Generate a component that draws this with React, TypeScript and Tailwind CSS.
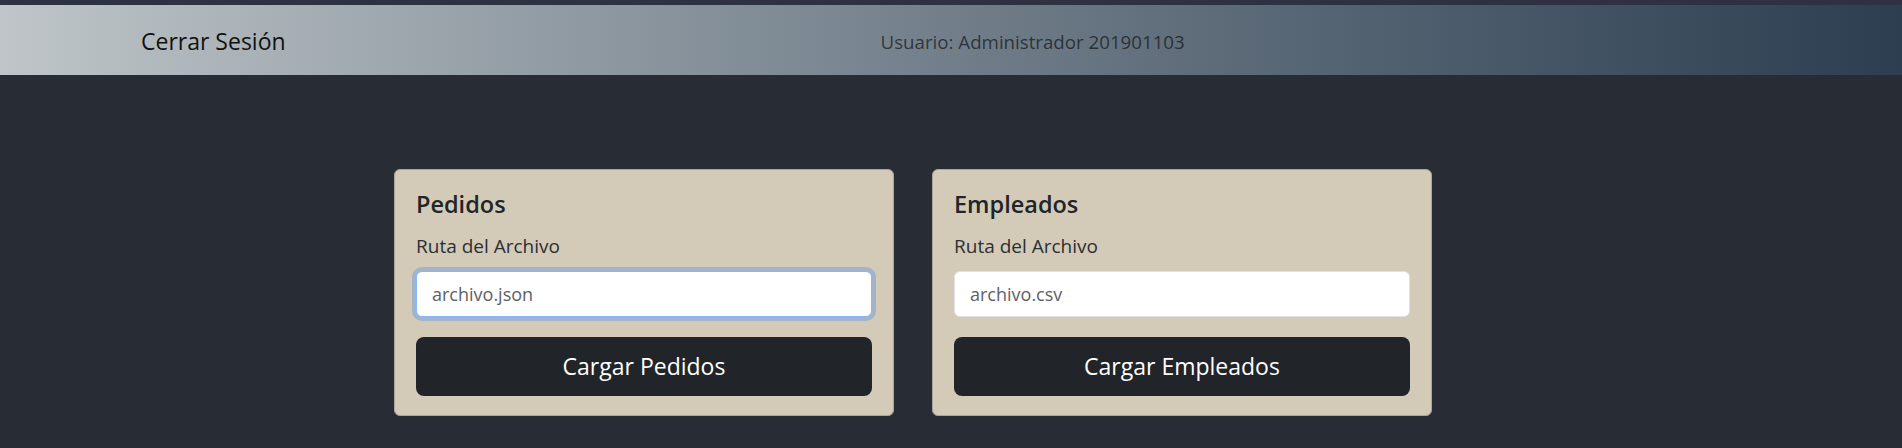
import React from "react";

interface Carga {
  id: string;
  titulo: string;
  placeholder: string;
  boton: string;
  activo?: boolean;
}

const cargas: Carga[] = [
  { id: "pedidos", titulo: "Pedidos", placeholder: "archivo.json", boton: "Cargar Pedidos", activo: true },
  { id: "empleados", titulo: "Empleados", placeholder: "archivo.csv", boton: "Cargar Empleados" },
];

function Navbar() {
  return (
    <nav className="h-[70px] flex items-center bg-linear-to-r from-[#bfc5c8] to-[#2c3e50]">
      <a href="#" className="ml-[141px] mt-[2px] text-[23px] text-[#111] leading-none">
        Cerrar Sesión
      </a>
      <span className="ml-[595px] mt-[4px] text-[18.7px] text-black/60 leading-none">
        Usuario: Administrador 201901103
      </span>
    </nav>
  );
}

function CardCarga({ carga }: { carga: Carga }) {
  return (
    <div className="w-[500px] bg-[#d3cbb8] border border-[#aaa597] rounded-[6px] pt-[20px] pb-[19px] px-[21px] flex flex-col">
      <h4 className="text-[23.5px] leading-[29px] font-semibold text-[#212529]">{carga.titulo}</h4>
      <label htmlFor={carga.id} className="mt-[13px] text-[19px] leading-[28px] text-[#2b2f33]">
        Ruta del Archivo
      </label>
      <input
        id={carga.id}
        type="text"
        placeholder={carga.placeholder}
        className={
          carga.activo
            ? "mt-[11px] h-[46px] w-full bg-white rounded-[6px] px-[15px] text-[18px] text-[#212529] placeholder:text-[#5d6166] outline-none border border-[#86b7fe] shadow-[0_0_0_4px_rgba(13,110,253,0.25)]"
            : "mt-[11px] h-[46px] w-full bg-white rounded-[6px] px-[15px] text-[18px] text-[#212529] placeholder:text-[#5d6166] outline-none border border-[#dee2e6]"
        }
      />
      <button className="mt-[20px] h-[59px] w-full bg-[#212529] rounded-[8px] text-white text-[23px]">
        {carga.boton}
      </button>
    </div>
  );
}

export default function App() {
  return (
    <div className="min-h-[448px] bg-[#282c34] font-['Open_Sans',sans-serif]">
      <div className="h-[5px] bg-[#2e3142]" />
      <Navbar />
      <div className="mt-[94px] pl-[394px] flex gap-[38px]">
        {cargas.map((c) => (
          <CardCarga key={c.id} carga={c} />
        ))}
      </div>
    </div>
  );
}
